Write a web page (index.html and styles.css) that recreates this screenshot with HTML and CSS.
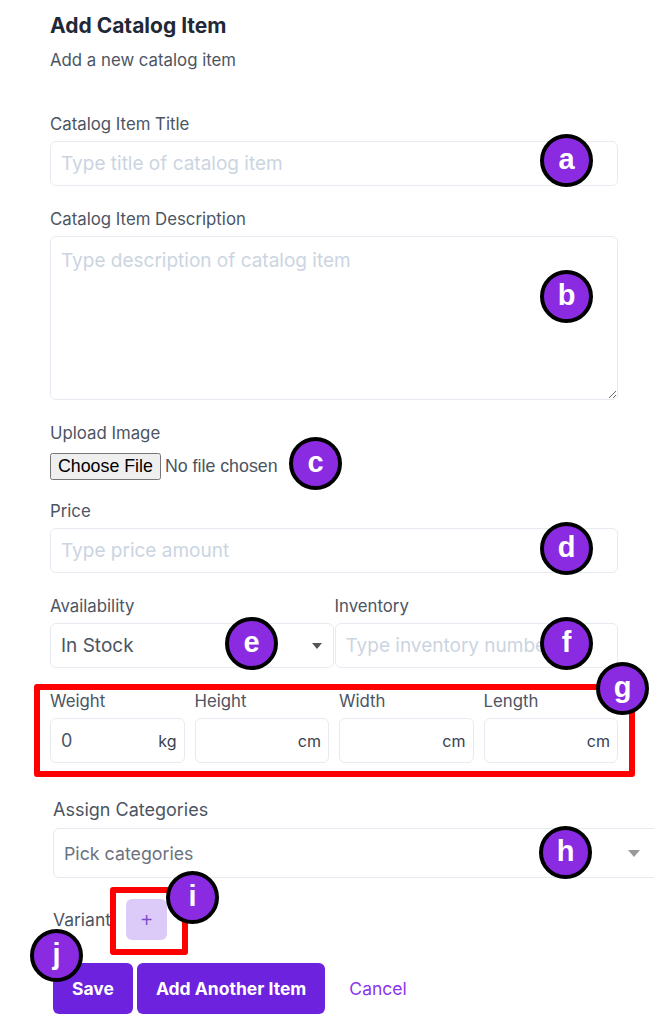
FILE: index.html
```html
<!DOCTYPE html>
<html lang="en">
<head>
    <meta charset="UTF-8">
    <meta name="viewport" content="width=device-width, initial-scale=1.0">
    <title>Add Catalog Item</title>
    <link rel="stylesheet" href="styles.css">
</head>
<body>

<div class="page">
    <div class="page-header">
        <h1>Add Catalog Item</h1>
        <p>Add a new catalog item</p>
    </div>

    <form class="catalog-form">
        <div class="field first">
            <label for="title">Catalog Item Title</label>
            <input type="text" id="title" class="text-input" placeholder="Type title of catalog item">
        </div>

        <div class="field">
            <label for="description">Catalog Item Description</label>
            <textarea id="description" class="text-input text-area" placeholder="Type description of catalog item"></textarea>
        </div>

        <div class="field">
            <label for="image">Upload Image</label>
            <input type="file" id="image" class="file-input">
        </div>

        <div class="field">
            <label for="price">Price</label>
            <input type="text" id="price" class="text-input" placeholder="Type price amount">
        </div>

        <div class="row two-col">
            <div class="field">
                <label for="availability">Availability</label>
                <div class="select-wrap">
                    <select id="availability" class="text-input select-input">
                        <option>In Stock</option>
                        <option>Out of Stock</option>
                    </select>
                    <svg class="caret" width="10" height="6" viewBox="0 0 10 6"><path d="M0 0h10L5 6z" fill="#555"/></svg>
                </div>
            </div>
            <div class="field">
                <label for="inventory">Inventory</label>
                <input type="text" id="inventory" class="text-input" placeholder="Type inventory number">
            </div>
        </div>

        <div class="row four-col">
            <div class="field">
                <label for="weight">Weight</label>
                <div class="unit-input">
                    <input type="text" id="weight" value="0">
                    <span>kg</span>
                </div>
            </div>
            <div class="field">
                <label for="height">Height</label>
                <div class="unit-input">
                    <input type="text" id="height">
                    <span>cm</span>
                </div>
            </div>
            <div class="field">
                <label for="width">Width</label>
                <div class="unit-input">
                    <input type="text" id="width">
                    <span>cm</span>
                </div>
            </div>
            <div class="field">
                <label for="length">Length</label>
                <div class="unit-input">
                    <input type="text" id="length">
                    <span>cm</span>
                </div>
            </div>
        </div>

        <div class="lower">
            <div class="field">
                <label>Assign Categories</label>
                <div class="multi-select">
                    <span>Pick categories</span>
                    <svg class="caret" width="12" height="7" viewBox="0 0 12 7"><path d="M0 0h12L6 7z" fill="#999"/></svg>
                </div>
            </div>

            <div class="variants">
                <span class="variants-label">Variants</span>
                <button type="button" class="add-variant">+</button>
            </div>

            <div class="actions">
                <button type="submit" class="btn-primary">Save</button>
                <button type="button" class="btn-primary">Add Another Item</button>
                <a href="#" class="btn-link">Cancel</a>
            </div>
        </div>
    </form>

    <!-- annotation marks -->
    <div class="mark-box box-g"></div>
    <div class="mark-box box-i"></div>

    <div class="mark m-a">a</div>
    <div class="mark m-b">b</div>
    <div class="mark m-c">c</div>
    <div class="mark m-d">d</div>
    <div class="mark m-e">e</div>
    <div class="mark m-f">f</div>
    <div class="mark m-g">g</div>
    <div class="mark m-h">h</div>
    <div class="mark m-i">i</div>
    <div class="mark m-j">j</div>
</div>

</body>
</html>
```

FILE: styles.css
```css
body {
    margin: 0;
    background-color: #ffffff;
    font-family: Inter, "Noto Sans", sans-serif;
    color: #4b5563;
    overflow: hidden;
}

.page {
    position: relative;
    padding: 12px 36px 0 50px;
    min-height: 1024px;
    box-sizing: border-box;
}

.page-header h1 {
    margin: 0;
    font-size: 21px;
    line-height: 28px;
    font-weight: 700;
    color: #1f2937;
}

.page-header p {
    margin: 10px 0 0;
    font-size: 16.8px;
    line-height: 20px;
    color: #4b5563;
}

.catalog-form {
    display: flex;
    flex-direction: column;
}

.field {
    display: flex;
    flex-direction: column;
    margin-top: 23px;
}

.field.first {
    margin-top: 44px;
}

.field label {
    font-size: 16.8px;
    line-height: 20px;
    color: #4b5563;
    margin-bottom: 7px;
}

.text-input {
    height: 45px;
    box-sizing: border-box;
    border: 1px solid #e6ebf2;
    border-radius: 6px;
    padding: 0 10px;
    font-family: Inter, "Noto Sans", sans-serif;
    font-size: 19px;
    color: #374151;
    background: #fff;
    outline: none;
}

.text-input::placeholder {
    color: #cbd5e1;
}

.text-area {
    height: 164px;
    padding: 12px 10px;
    resize: vertical;
}

.file-input {
    margin-top: 3px;
    margin-bottom: -2px;
    font-family: "Liberation Sans", Arial, sans-serif;
    font-size: 17.8px;
    color: #4b5563;
}

.row {
    display: grid;
}

.row .field {
    min-width: 0;
}

.two-col {
    grid-template-columns: 1fr 1fr;
    column-gap: 1px;
}

.four-col {
    grid-template-columns: repeat(4, 1fr);
    column-gap: 10px;
}

.select-wrap {
    position: relative;
}

.select-input {
    width: 100%;
    appearance: none;
    -webkit-appearance: none;
    color: #4b5563;
}

.select-wrap .caret {
    position: absolute;
    right: 12px;
    top: 20px;
}

.unit-input {
    display: flex;
    align-items: center;
    height: 45px;
    box-sizing: border-box;
    border: 1px solid #e6ebf2;
    border-radius: 6px;
    padding: 0 7px 0 10px;
}

.unit-input input {
    flex: 1;
    min-width: 0;
    border: none;
    outline: none;
    padding: 0;
    font-family: Inter, "Noto Sans", sans-serif;
    font-size: 18px;
    color: #4b5563;
    background: transparent;
}

.unit-input span {
    font-size: 16px;
    color: #374151;
}

.lower {
    margin-left: 3px;
    margin-right: -60px;
}

.lower .field {
    margin-top: 37px;
}

.lower .field label {
    font-size: 18px;
    margin-bottom: 8px;
}

.multi-select {
    display: flex;
    align-items: center;
    justify-content: space-between;
    height: 50px;
    box-sizing: border-box;
    border: 1px solid #e6ebf2;
    border-radius: 6px;
    padding: 0 37px 0 10px;
    font-size: 17.8px;
    color: #6b7280;
}

.variants {
    display: flex;
    align-items: center;
    gap: 6px;
    margin-top: 21px;
}

.variants-label {
    font-size: 17.5px;
    color: #4b5563;
}

.add-variant {
    position: relative;
    z-index: 1;
    width: 41px;
    height: 41px;
    border: none;
    border-radius: 6px;
    background-color: #dccbf8;
    color: #7c4bc9;
    font-size: 20px;
    font-weight: 300;
    line-height: 1;
    cursor: pointer;
}

.actions {
    display: flex;
    align-items: center;
    gap: 4px;
    margin-top: 23px;
}

.btn-primary {
    height: 51px;
    padding: 0 19px;
    border: none;
    border-radius: 6px;
    background-color: #6d22dd;
    color: #ffffff;
    font-family: Inter, "Noto Sans", sans-serif;
    font-size: 17.5px;
    font-weight: 700;
    cursor: pointer;
}

.btn-link {
    margin-left: 20px;
    color: #8b35ec;
    text-decoration: none;
    font-size: 17.5px;
}

/* annotations over the form */
.mark-box {
    position: absolute;
    border: 6px solid #ff0000;
    border-radius: 3px;
    box-sizing: border-box;
}

.box-g {
    left: 34px;
    top: 684px;
    width: 601px;
    height: 93px;
}

.box-i {
    left: 110px;
    top: 887px;
    width: 78px;
    height: 68px;
    background-color: #fff;
}

.mark {
    position: absolute;
    z-index: 2;
    width: 53px;
    height: 53px;
    margin: -26px 0 0 -26px;
    box-sizing: border-box;
    border: 4px solid #000;
    border-radius: 50%;
    background-color: #8a2be2;
    color: #fff;
    font-family: "Liberation Sans", Arial, sans-serif;
    font-size: 29px;
    font-weight: 700;
    display: flex;
    align-items: center;
    justify-content: center;
    padding-bottom: 2px;
}

.m-a { left: 566px; top: 160px; }
.m-b { left: 566px; top: 296px; }
.m-c { left: 315px; top: 463px; }
.m-d { left: 566px; top: 548px; }
.m-e { left: 251px; top: 643px; }
.m-f { left: 566px; top: 643px; }
.m-g { left: 622px; top: 688px; }
.m-h { left: 565px; top: 852px; }
.m-i { left: 192px; top: 897px; }
.m-j { left: 56px; top: 955px; }
```
